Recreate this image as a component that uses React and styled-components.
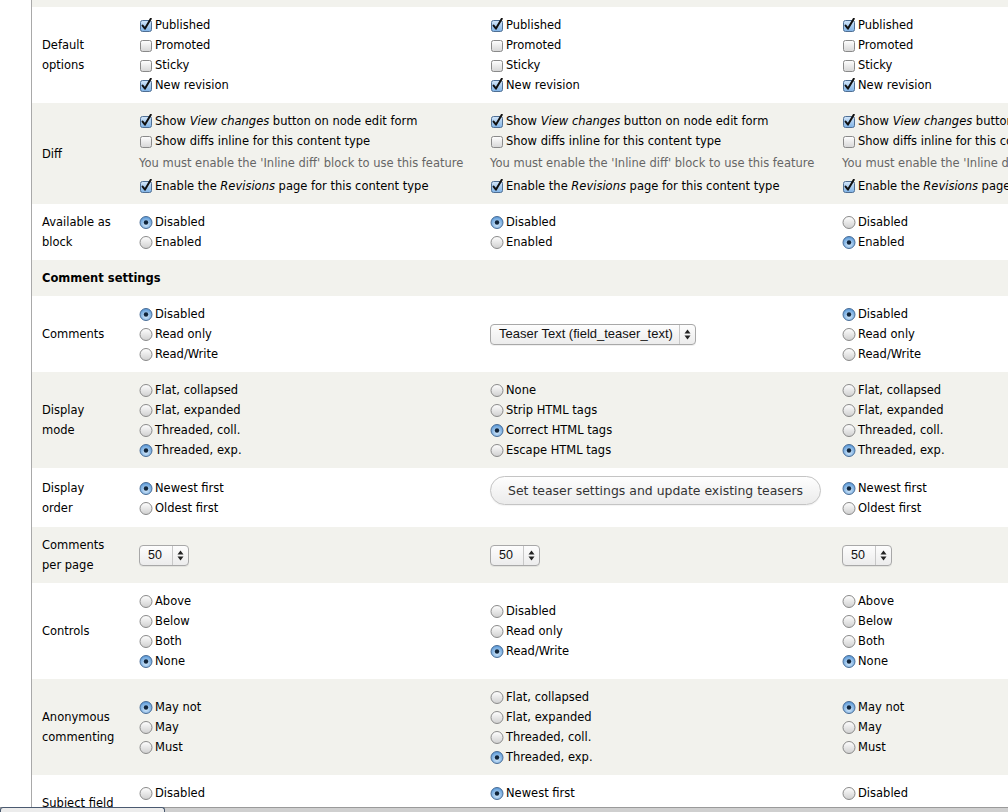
import React from 'react'
import styled, { createGlobalStyle } from 'styled-components'

const GlobalStyle = createGlobalStyle`
  html, body { margin: 0; padding: 0; background: #fff; }
  body {
    font-family: "DejaVu Sans", "Liberation Sans", sans-serif;
    font-size: 11.5px;
    color: #000;
    overflow: hidden;
  }
`

const Page = styled.div`
  display: flex;
  width: 100%;
  height: 812px;
  overflow: hidden;
`

const Gutter = styled.div`
  flex: 0 0 31px;
  border-right: 1px solid #a9a9a9;
  background: #fff;
`

const Scroller = styled.div`
  flex: 1;
  overflow: hidden;
`

const Table = styled.table`
  border-collapse: collapse;
  table-layout: fixed;
  width: 1151px;
`

const Row = styled.tr`
  background: ${(p) => (p.$shaded ? '#f2f2ed' : '#fff')};
`

const Cell = styled.td`
  vertical-align: middle;
  padding: 8px 10px;
  line-height: 20px;
`

const LabelCell = styled(Cell)`
  white-space: pre-line;
`

const SectionCell = styled(Cell)`
  font-weight: bold;
`

const TopCut = styled.td`
  height: 7px;
  padding: 0;
`

const Option = styled.label`
  display: flex;
  align-items: center;
  gap: 2px;
  height: 20px;
  white-space: nowrap;
`

const Hint = styled.div`
  color: #666;
  white-space: nowrap;
  margin: 2px 0 3px;
`

const SelectBox = styled.div`
  display: inline-flex;
  align-items: stretch;
  height: 19px;
  border: 1px solid #a8a8a8;
  border-radius: 4px;
  background: linear-gradient(#fdfdfd, #ececec);
  box-shadow: 0 1px 0 rgba(0, 0, 0, 0.06);
  font-family: "Liberation Sans", Arial, sans-serif;
  font-size: ${(p) => (p.$narrow ? '12.5px' : '13px')};
  color: #111;
  vertical-align: middle;
`

const SelectValue = styled.span`
  display: flex;
  align-items: center;
  padding: ${(p) => (p.$narrow ? '0 10px 0 8px' : '0 6px 0 8px')};
`

const SelectArrows = styled.span`
  display: flex;
  align-items: center;
  justify-content: center;
  width: 15px;
  border-left: 1px solid #c8c8c8;
`

const PillButton = styled.button`
  display: block;
  height: 29px;
  margin: 0 0 14px;
  padding: 0 17px;
  border: 1px solid #c4c4c4;
  border-radius: 15px;
  background: linear-gradient(#fefefe, #ebebeb);
  font-family: "DejaVu Sans", sans-serif;
  font-size: 12.45px;
  color: #333;
  white-space: nowrap;
  box-shadow: 0 1px 1px rgba(0, 0, 0, 0.05);
`

const BottomBar = styled.div`
  position: fixed;
  left: 0;
  right: 0;
  bottom: 0;
  height: 4px;
  background: #cfcfcf;
  border-top: 1px solid #9a9a9a;
  display: flex;
`

const BottomTab = styled.div`
  width: 163px;
  height: 6px;
  margin-top: -1px;
  border: 1px solid #4a5a70;
  border-bottom: none;
  border-radius: 3px 3px 0 0;
  background: #ececec;
`

const Checkbox = ({ checked }) => (
  <svg width="14" height="14" viewBox="0 0 14 14">
    <defs>
      <linearGradient id="cbOff" x1="0" y1="0" x2="0" y2="1">
        <stop offset="0" stopColor="#ffffff" />
        <stop offset="1" stopColor="#d6d6d6" />
      </linearGradient>
      <linearGradient id="cbOn" x1="0" y1="0" x2="0" y2="1">
        <stop offset="0" stopColor="#d4e7fa" />
        <stop offset="1" stopColor="#7fb2e5" />
      </linearGradient>
    </defs>
    <rect x="1.5" y="2.5" width="11" height="11" rx="2" fill={checked ? 'url(#cbOn)' : 'url(#cbOff)'} stroke={checked ? '#4f6f94' : '#8a8a8a'} />
    {checked && <path d="M3.6 7.6 L6 10.6 L11.8 0.8" fill="none" stroke="#111" strokeWidth="2" strokeLinecap="round" strokeLinejoin="round" />}
  </svg>
)

const Radio = ({ checked }) => (
  <svg width="14" height="14" viewBox="0 0 14 14">
    <defs>
      <linearGradient id="rdOff" x1="0" y1="0" x2="0" y2="1">
        <stop offset="0" stopColor="#ffffff" />
        <stop offset="1" stopColor="#cfcfcf" />
      </linearGradient>
      <radialGradient id="rdOn" cx="0.5" cy="0.65" r="0.6">
        <stop offset="0" stopColor="#d9ecfc" />
        <stop offset="1" stopColor="#5c9ad8" />
      </radialGradient>
    </defs>
    <circle cx="7" cy="7.5" r="6" fill={checked ? 'url(#rdOn)' : 'url(#rdOff)'} stroke={checked ? '#4a6d96' : '#8a8a8a'} />
    {checked && <circle cx="7" cy="7.5" r="2.2" fill="#10243a" />}
  </svg>
)

const UpDown = () => (
  <svg width="7" height="11" viewBox="0 0 7 11">
    <path d="M3.5 0.5 L6.5 4.5 H0.5 Z M3.5 10.5 L6.5 6.5 H0.5 Z" fill="#222" />
  </svg>
)

// items: [text, checked] pairs; 'hint' puts the inline diff note in between
const Checks = ({ items }) =>
  items.map(([text, on], i) =>
    text === 'hint' ? (
      <Hint key={i}>You must enable the 'Inline diff' block to use this feature</Hint>
    ) : (
      <Option key={i}>
        <Checkbox checked={on} />
        <span>{text}</span>
      </Option>
    )
  )

const Radios = ({ items, picked }) =>
  items.map((text, i) => (
    <Option key={i}>
      <Radio checked={i === picked} />
      <span>{text}</span>
    </Option>
  ))

const Select = ({ value, narrow }) => (
  <SelectBox $narrow={narrow}>
    <SelectValue $narrow={narrow}>{value}</SelectValue>
    <SelectArrows>
      <UpDown />
    </SelectArrows>
  </SelectBox>
)

const defaults = [
  ['Published', true],
  ['Promoted', false],
  ['Sticky', false],
  ['New revision', true],
]

const diff = [
  [<>Show <em>View changes</em> button on node edit form</>, true],
  ['Show diffs inline for this content type', false],
  ['hint'],
  [<>Enable the <em>Revisions</em> page for this content type</>, true],
]

const blockOpts = ['Disabled', 'Enabled']
const commentOpts = ['Disabled', 'Read only', 'Read/Write']
const modeOpts = ['Flat, collapsed', 'Flat, expanded', 'Threaded, coll.', 'Threaded, exp.']
const filterOpts = ['None', 'Strip HTML tags', 'Correct HTML tags', 'Escape HTML tags']
const orderOpts = ['Newest first', 'Oldest first']
const controlOpts = ['Above', 'Below', 'Both', 'None']
const anonOpts = ['May not', 'May', 'Must']

const App = () => (
  <>
    <GlobalStyle />
    <Page>
      <Gutter />
      <Scroller>
        <Table>
          <colgroup>
            <col style={{ width: 97 }} />
            <col style={{ width: 351 }} />
            <col style={{ width: 352 }} />
            <col style={{ width: 351 }} />
          </colgroup>
          <tbody>
            <Row $shaded>
              <TopCut colSpan={4} />
            </Row>
            <Row>
              <LabelCell>{'Default\noptions'}</LabelCell>
              <Cell><Checks items={defaults} /></Cell>
              <Cell><Checks items={defaults} /></Cell>
              <Cell><Checks items={defaults} /></Cell>
            </Row>
            <Row $shaded>
              <LabelCell>Diff</LabelCell>
              <Cell><Checks items={diff} /></Cell>
              <Cell><Checks items={diff} /></Cell>
              <Cell><Checks items={diff} /></Cell>
            </Row>
            <Row>
              <LabelCell>{'Available as\nblock'}</LabelCell>
              <Cell><Radios items={blockOpts} picked={0} /></Cell>
              <Cell><Radios items={blockOpts} picked={0} /></Cell>
              <Cell><Radios items={blockOpts} picked={1} /></Cell>
            </Row>
            <Row $shaded>
              <SectionCell colSpan={4}>Comment settings</SectionCell>
            </Row>
            <Row>
              <LabelCell>Comments</LabelCell>
              <Cell><Radios items={commentOpts} picked={0} /></Cell>
              <Cell><Select value="Teaser Text (field_teaser_text)" /></Cell>
              <Cell><Radios items={commentOpts} picked={0} /></Cell>
            </Row>
            <Row $shaded>
              <LabelCell>{'Display\nmode'}</LabelCell>
              <Cell><Radios items={modeOpts} picked={3} /></Cell>
              <Cell><Radios items={filterOpts} picked={2} /></Cell>
              <Cell><Radios items={modeOpts} picked={3} /></Cell>
            </Row>
            <Row>
              <LabelCell>{'Display\norder'}</LabelCell>
              <Cell><Radios items={orderOpts} picked={0} /></Cell>
              <Cell><PillButton>Set teaser settings and update existing teasers</PillButton></Cell>
              <Cell><Radios items={orderOpts} picked={0} /></Cell>
            </Row>
            <Row $shaded>
              <LabelCell>{'Comments\nper page'}</LabelCell>
              <Cell><Select value="50" narrow /></Cell>
              <Cell><Select value="50" narrow /></Cell>
              <Cell><Select value="50" narrow /></Cell>
            </Row>
            <Row>
              <LabelCell>Controls</LabelCell>
              <Cell><Radios items={controlOpts} picked={3} /></Cell>
              <Cell><Radios items={commentOpts} picked={2} /></Cell>
              <Cell><Radios items={controlOpts} picked={3} /></Cell>
            </Row>
            <Row $shaded>
              <LabelCell>{'Anonymous\ncommenting'}</LabelCell>
              <Cell><Radios items={anonOpts} picked={0} /></Cell>
              <Cell><Radios items={modeOpts} picked={3} /></Cell>
              <Cell><Radios items={anonOpts} picked={0} /></Cell>
            </Row>
            <Row>
              <LabelCell>Subject field</LabelCell>
              <Cell><Radios items={blockOpts} picked={-1} /></Cell>
              <Cell><Radios items={orderOpts} picked={0} /></Cell>
              <Cell><Radios items={blockOpts} picked={-1} /></Cell>
            </Row>
          </tbody>
        </Table>
      </Scroller>
    </Page>
    <BottomBar>
      <BottomTab />
    </BottomBar>
  </>
)

export default App
